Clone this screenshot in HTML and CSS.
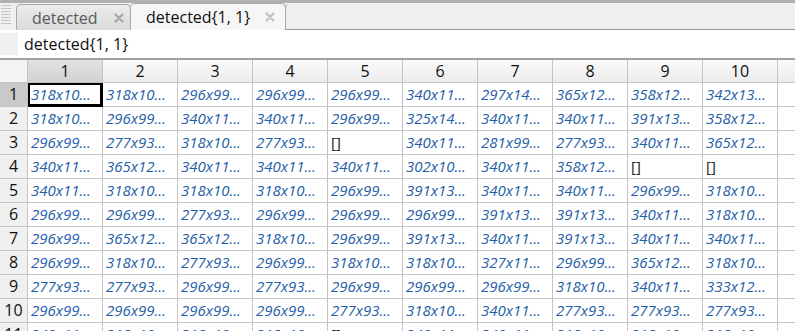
FILE: index.html
```html
<!DOCTYPE html>
<html>
<head>
  <title>Variables - detected{1, 1}</title>
  <link rel="stylesheet" href="styles.css">
</head>

<body>
  <div class="tabbar">
    <div class="grip"></div>
    <div class="tab">
      <span class="tab-label">detected</span>
      <svg class="close" width="10" height="10" viewBox="0 0 10 10"><path d="M1.5 1.5 L8.5 8.5 M8.5 1.5 L1.5 8.5" stroke="#a8a8a8" stroke-width="2.4" stroke-linecap="round"/></svg>
    </div>
    <div class="tab active">
      <span class="tab-label">detected{1, 1}</span>
      <svg class="close" width="10" height="10" viewBox="0 0 10 10"><path d="M1.5 1.5 L8.5 8.5 M8.5 1.5 L1.5 8.5" stroke="#c4c4c4" stroke-width="2.4" stroke-linecap="round"/></svg>
    </div>
    <div class="tab-rest"></div>
  </div>

  <div class="address">
    <div class="address-box"></div>
    <span class="address-text">detected{1, 1}</span>
  </div>

  <div id="grid" class="grid"></div>

  <script>
    document.addEventListener('DOMContentLoaded', function () {
      // cell contents of detected{1, 1}, row by row
      const data = [
        ['318x10', '318x10', '296x99', '296x99', '296x99', '340x11', '297x14', '365x12', '358x12', '342x13'],
        ['318x10', '296x99', '340x11', '340x11', '296x99', '325x14', '340x11', '340x11', '391x13', '358x12'],
        ['296x99', '277x93', '318x10', '277x93', '[]', '340x11', '281x99', '277x93', '340x11', '365x12'],
        ['340x11', '365x12', '340x11', '340x11', '340x11', '302x10', '340x11', '358x12', '[]', '[]'],
        ['340x11', '318x10', '318x10', '318x10', '296x99', '391x13', '340x11', '340x11', '296x99', '318x10'],
        ['296x99', '296x99', '277x93', '296x99', '296x99', '296x99', '391x13', '391x13', '340x11', '318x10'],
        ['296x99', '365x12', '365x12', '318x10', '296x99', '391x13', '340x11', '391x13', '340x11', '340x11'],
        ['296x99', '318x10', '277x93', '296x99', '318x10', '318x10', '327x11', '296x99', '365x12', '318x10'],
        ['277x93', '277x93', '296x99', '277x93', '296x99', '296x99', '296x99', '318x10', '340x11', '333x12'],
        ['296x99', '296x99', '296x99', '296x99', '277x93', '318x10', '340x11', '277x93', '277x93', '277x93'],
        ['340x11', '318x10', '318x10', '318x10', '[]', '340x11', '340x11', '318x10', '318x10', '318x10']
      ];

      const grid = document.getElementById('grid');
      let html = '<div class="corner"></div>';
      for (let c = 1; c <= 10; c++) {
        html += '<div class="col-head' + (c === 1 ? ' sel' : '') + '">' + c + '</div>';
      }
      html += '<div class="col-head blank"></div>';

      data.forEach((row, r) => {
        html += '<div class="row-head' + (r === 0 ? ' sel' : '') + '">' + (r + 1) + '</div>';
        row.forEach((val, c) => {
          let cls = 'cell';
          if (val === '[]') cls += ' empty';
          if (r === 0 && c === 0) cls += ' current';
          html += '<div class="' + cls + '">' + (val === '[]' ? val : val + '...') + '</div>';
        });
        html += '<div class="cell blank"></div>';
      });

      grid.innerHTML = html;
    });
  </script>
</body>
</html>
```

FILE: styles.css
```css
body {
  margin: 0;
  padding: 0;
  width: 795px;
  height: 331px;
  overflow: hidden;
  background-color: #fff;
  font-family: "Open Sans", "Noto Sans", sans-serif;
}

/* document tabs */
.tabbar {
  display: flex;
  align-items: flex-end;
  height: 30px;
  box-sizing: border-box;
  border-top: 3px solid #b0b0b0;
  background-color: #f0f0f0;
}

.grip {
  align-self: stretch;
  width: 10px;
  margin: 2px 5px 4px 1px;
  background-image: repeating-linear-gradient(180deg, #c4c4c4 0 1px, transparent 1px 3px);
}

.tab {
  display: flex;
  align-items: center;
  justify-content: space-between;
  height: 26px;
  box-sizing: border-box;
  padding: 0 6px 0 15px;
  border: 1px solid #a8a8a8;
  border-bottom: none;
  border-radius: 5px 5px 0 0;
  font-size: 16px;
}

.tab .tab-label {
  color: #5a5a5a;
}

.grip + .tab {
  width: 115px;
  background: linear-gradient(#ececec, #dadada);
}

.tab.active {
  width: 156px;
  height: 27px;
  margin-left: -1px;
  padding-right: 10px;
  background-color: #f6f6f6;
  border-bottom: 1px solid #f6f6f6;
}

.tab.active .tab-label {
  color: #111;
}

.tab-rest {
  flex: 1;
  height: 26px;
  box-sizing: border-box;
  margin-left: -1px;
  background-color: #efefef;
  border-left: 1px solid #a8a8a8;
  border-bottom: 1px solid #969696;
  border-radius: 4px 0 0 0;
}

/* variable name row */
.address {
  display: flex;
  align-items: center;
  height: 28px;
  border-bottom: 2px solid #a0a0a0;
}

.address-box {
  width: 18px;
  height: 22px;
  margin-right: 6px;
  background-color: #f0f0f0;
}

.address-text {
  font-size: 16px;
  color: #111;
}

/* spreadsheet */
.grid {
  display: grid;
  grid-template-columns: 28px repeat(10, 75px) 1fr;
  grid-auto-rows: 24px;
  grid-template-rows: 23px;
}

.grid > div {
  box-sizing: border-box;
  border-right: 1px solid #c4c4c4;
  border-bottom: 1px solid #c4c4c4;
  white-space: nowrap;
  overflow: hidden;
}

.corner {
  background-color: #f4f4f4;
}

.col-head {
  text-align: center;
  font-size: 16px;
  line-height: 22px;
  color: #111;
  background: linear-gradient(#fafafa, #ececec);
}

.col-head.sel {
  background: linear-gradient(#e2e2e2, #d2d2d2);
}

.col-head.blank {
  border-right: none;
}

.row-head {
  text-align: center;
  font-size: 16px;
  line-height: 23px;
  color: #111;
  background-color: #f0f0f0;
}

.row-head.sel {
  background-color: #c9c9c9;
}

.cell {
  padding-left: 3px;
  font-size: 15px;
  font-style: italic;
  line-height: 23px;
  color: #2460a7;
}

.cell.empty {
  font-style: normal;
  color: #222;
}

.cell.current {
  box-shadow: inset 0 0 0 2px #000;
  border-color: #000;
}

.cell.blank {
  border-right: none;
}
```
